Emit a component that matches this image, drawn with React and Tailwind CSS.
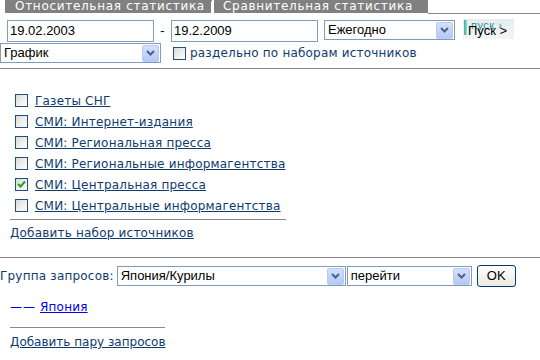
import React from 'react';

const navy = 'text-[#0e3b6e]';

function Arrow() {
  return (
    <div className="w-[17px] h-[17px] mr-[1px] rounded-[2px] border border-[#b9cbf3] bg-gradient-to-b from-[#d3e0fd] to-[#b5c9f6] flex items-center justify-center">
      <svg width="9" height="6" viewBox="0 0 9 6">
        <polyline points="1,1 4.5,4.5 8,1" fill="none" stroke="#4d6185" strokeWidth="2" />
      </svg>
    </div>
  );
}

function Select({ value, className = '' }) {
  return (
    <div className={`${className} h-[20px] border border-[#7f9db9] bg-white flex items-center`}>
      <span className="flex-1 pl-[3px] text-[13px] leading-[18px] text-black tracking-normal font-['Liberation_Sans',sans-serif] truncate">{value}</span>
      <Arrow />
    </div>
  );
}

function Box({ checked = false }) {
  return (
    <div className="w-[13px] h-[13px] border border-[#1c5180] bg-gradient-to-br from-[#dcdcd5] to-white flex items-center justify-center shrink-0">
      {checked && (
        <svg width="9" height="9" viewBox="0 0 9 9">
          <polyline points="1,4 3.5,6.5 8,1.5" fill="none" stroke="#21a121" strokeWidth="2" />
        </svg>
      )}
    </div>
  );
}

const sources = [
  { name: 'Газеты СНГ' },
  { name: 'СМИ: Интернет-издания' },
  { name: 'СМИ: Региональная пресса' },
  { name: 'СМИ: Региональные информагентства' },
  { name: 'СМИ: Центральная пресса', checked: true },
  { name: 'СМИ: Центральные информагентства' }
];

export default function App() {
  return (
    <div className="w-[540px] h-[360px] bg-white overflow-hidden font-['DejaVu_Sans',sans-serif] text-[12px] tracking-[0.2px]">
      {/* Tabs */}
      <div className="flex h-[14px]">
        <div className="ml-[5px] w-[206px] h-[13px] bg-[#808080] text-white pl-[10px] leading-[13px] tracking-[0.7px] whitespace-nowrap overflow-hidden">
          Относительная статистика
        </div>
        <svg width="4" height="13" viewBox="0 0 4 13" className="shrink-0">
          <polygon points="0,3 1,0 0,0" fill="#808080" />
          <polygon points="3,0 4,0 4,13 3,13" fill="#808080" />
        </svg>
        <div className="w-[213px] h-[13px] bg-[#808080] text-white pl-[8px] leading-[13px] tracking-[0.7px] whitespace-nowrap overflow-hidden">
          Сравнительная статистика
        </div>
        <div className="flex-1 border-b border-[#888]" />
      </div>

      {/* Dates row */}
      <div className="flex items-center mt-[6px] h-[22px] tracking-normal">
        <div className="ml-[7px] w-[147px] h-[22px] border border-[#7f9db9] pl-[2px] text-[13px] leading-[20px] font-['Liberation_Sans',sans-serif] text-black">
          19.02.2003
        </div>
        <span className="w-[17px] text-center text-[13px] text-black font-['Liberation_Sans',sans-serif]">-</span>
        <div className="w-[147px] h-[22px] border border-[#7f9db9] pl-[2px] text-[13px] leading-[20px] font-['Liberation_Sans',sans-serif] text-black">
          19.2.2009
        </div>
        <Select value="Ежегодно" className="ml-[6px] w-[131px] self-start" />
        <div className="relative ml-[8px] w-[51px] h-[20px] self-start -mt-[1px] bg-gradient-to-b from-[#e6ecec] to-[#f3f5f5] overflow-hidden">
          <div className="absolute left-[1px] top-[1px] w-[3px] h-[15px] bg-gradient-to-r from-[#2bb39a] to-[#8fe0cf]" />
          <span className="absolute left-[8px] -top-[2px] text-[11px] text-[#2a8f8f] tracking-[0.5px] font-['Liberation_Sans',sans-serif]">пуск ›</span>
          <span className="absolute left-[5px] top-[2px] text-[13px] text-black font-['Liberation_Sans',sans-serif]">Пуск &gt;</span>
        </div>
      </div>

      {/* Chart type row */}
      <div className="flex items-center mt-[1px] h-[20px]">
        <Select value="График" className="w-[161px]" />
        <div className="ml-[12px]">
          <Box />
        </div>
        <span className={`ml-[4px] ${navy}`}>раздельно по наборам источников</span>
      </div>

      <div className="mt-[5px] border-t border-[#888]" />

      {/* Source sets */}
      <div className="mt-[21px] pl-[15px]">
        {sources.map((s) => (
          <div key={s.name} className="h-[21px] flex items-center">
            <Box checked={s.checked} />
            <a href="#" className={`ml-[7px] ${navy} underline whitespace-nowrap`}>{s.name}</a>
          </div>
        ))}
      </div>
      <div className="ml-[10px] w-[276px] mt-[3px] border-t border-[#888]" />
      <div className="ml-[10px] mt-[6px] leading-[15px]">
        <a href="#" className={`${navy} underline`}>Добавить набор источников</a>
      </div>

      <div className="mt-[16px] border-t border-[#888]" />

      {/* Query group */}
      <div className="flex items-center mt-[7px] h-[22px]">
        <span className={`${navy} whitespace-nowrap`}>Группа запросов:</span>
        <Select value="Япония/Курилы" className="ml-[3px] w-[229px]" />
        <Select value="перейти" className="ml-[1px] w-[125px]" />
        <button className="ml-[5px] w-[39px] h-[22px] rounded-[3px] border border-[#003c74] bg-gradient-to-b from-white to-[#ece9e0] text-[13px] text-black tracking-normal font-['Liberation_Sans',sans-serif]">
          OK
        </button>
      </div>

      <div className="ml-[10px] mt-[13px] leading-[15px] flex items-center text-[#0000ee]">
        <span className="tracking-[1px]">——</span>
        <a href="#" className="ml-[4px] underline">Япония</a>
      </div>
      <div className="ml-[10px] w-[155px] mt-[12px] border-t border-[#888]" />
      <div className="ml-[10px] mt-[7px] leading-[15px] tracking-normal">
        <a href="#" className={`${navy} underline`}>Добавить пару запросов</a>
      </div>
    </div>
  );
}
